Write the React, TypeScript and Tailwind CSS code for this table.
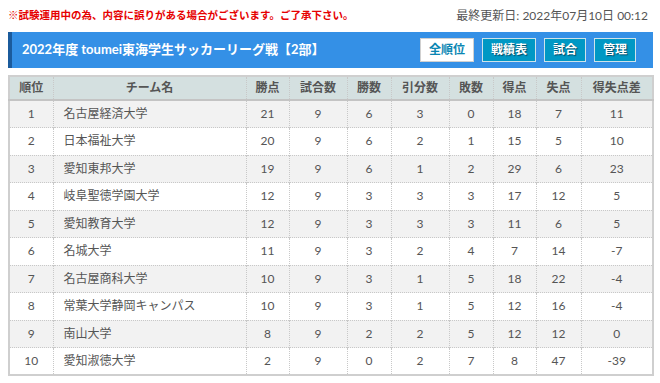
const font = "font-['Lato','Noto_Sans_CJK_JP',sans-serif]"

type Row = [number, string, number, number, number, number, number, number, number, number]

const rows: Row[] = [
  [1, '名古屋経済大学', 21, 9, 6, 3, 0, 18, 7, 11],
  [2, '日本福祉大学', 20, 9, 6, 2, 1, 15, 5, 10],
  [3, '愛知東邦大学', 19, 9, 6, 1, 2, 29, 6, 23],
  [4, '岐阜聖徳学園大学', 12, 9, 3, 3, 3, 17, 12, 5],
  [5, '愛知教育大学', 12, 9, 3, 3, 3, 11, 6, 5],
  [6, '名城大学', 11, 9, 3, 2, 4, 7, 14, -7],
  [7, '名古屋商科大学', 10, 9, 3, 1, 5, 18, 22, -4],
  [8, '常葉大学静岡キャンパス', 10, 9, 3, 1, 5, 12, 16, -4],
  [9, '南山大学', 8, 9, 2, 2, 5, 12, 12, 0],
  [10, '愛知淑徳大学', 2, 9, 0, 2, 7, 8, 47, -39],
]

const headers = ['順位', 'チーム名', '勝点', '試合数', '勝数', '引分数', '敗数', '得点', '失点', '得失点差']
const widths = ['w-[44px]', 'w-[193px]', 'w-[43px]', 'w-[58px]', 'w-[44px]', 'w-[58px]', 'w-[44px]', 'w-[43px]', 'w-[45px]', 'w-[72px]']

export default function App() {
  return (
    <div className={`${font} bg-white w-[660px] h-[383px] overflow-hidden px-2`}>
      {/* notice line */}
      <div className="flex items-center justify-between h-[32px] pr-1">
        <span className="text-[10.5px] font-bold text-[#e60000]">
          ※試験運用中の為、内容に誤りがある場合がございます。ご了承下さい。
        </span>
        <span className="text-[12px] text-[#555]">最終更新日: 2022年07月10日 00:12</span>
      </div>

      {/* title bar */}
      <div className="flex items-center justify-between h-[36px] w-[645px] bg-[#3490e6] border-l-4 border-[#1b5b9c] pl-[10px] pr-[17px]">
        <h1 className="text-[13px] font-bold text-white">2022年度 toumei東海学生サッカーリーグ戦【2部】</h1>
        <div className="flex gap-[8px] items-center">
          <button className="h-[24px] w-[54px] bg-white border border-[#d0d0d0] text-[12px] font-bold text-[#0a86b3]">
            全順位
          </button>
          <button className="h-[24px] w-[54px] bg-[#0098c4] border border-[#cfe3ea] text-[12px] font-bold text-white [text-shadow:1px_1px_1px_#004a66]">
            戦績表
          </button>
          <button className="h-[24px] w-[42px] bg-[#0098c4] border border-[#cfe3ea] text-[12px] font-bold text-white [text-shadow:1px_1px_1px_#004a66]">
            試合
          </button>
          <button className="h-[24px] w-[42px] bg-[#0098c4] border border-[#cfe3ea] text-[12px] font-bold text-white [text-shadow:1px_1px_1px_#004a66]">
            管理
          </button>
        </div>
      </div>

      {/* standings */}
      <table className="mt-[7px] w-[645px] border-collapse border-2 border-[#cfcfcf] table-fixed text-[12px] text-[#555]">
        <thead>
          <tr className="h-[24px] bg-[#d4e0e0] border-b-2 border-[#c4c4c4]">
            {headers.map((h, i) => (
              <th key={h} className={`${widths[i]} font-bold text-[#555] text-center border-r border-dotted border-[#c8c8c8] last:border-r-0`}>
                {h}
              </th>
            ))}
          </tr>
        </thead>
        <tbody>
          {rows.map((r, idx) => (
            <tr key={r[0]} className={`h-[27.5px] border-b border-dotted border-[#c8c8c8] ${idx % 2 === 0 ? 'bg-[#f2f2f2]' : 'bg-white'}`}>
              {r.map((v, i) => (
                <td
                  key={i}
                  className={`border-r border-dotted border-[#c8c8c8] last:border-r-0 ${i === 1 ? 'text-left pl-[10px]' : 'text-center'}`}
                >
                  {v}
                </td>
              ))}
            </tr>
          ))}
        </tbody>
      </table>
    </div>
  )
}
